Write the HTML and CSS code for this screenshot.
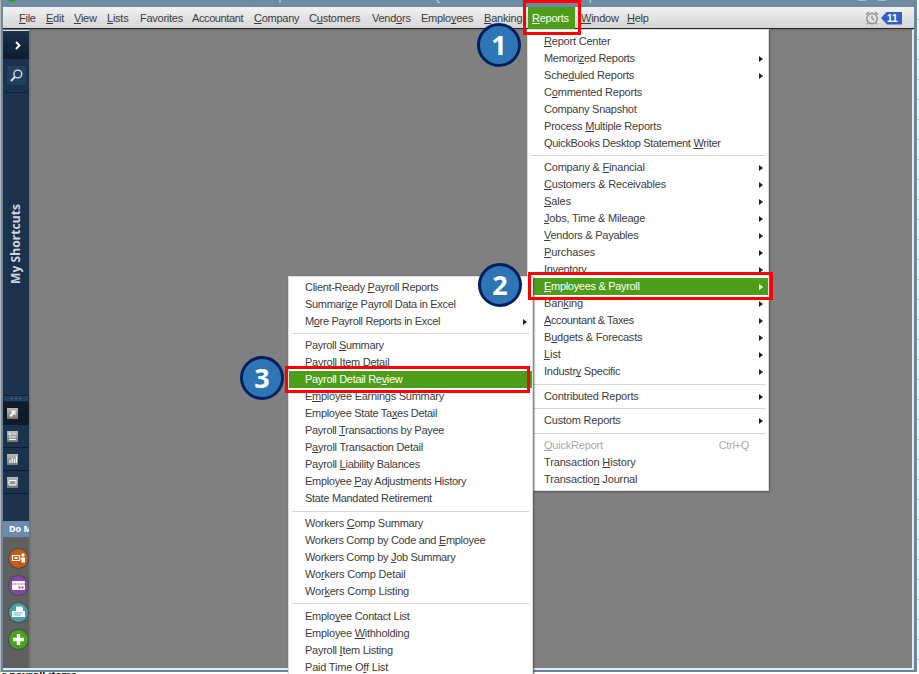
FILE: index.html
```html
<!DOCTYPE html>
<html lang="en">
<head>
<meta charset="utf-8">
<title>Reports menu</title>
<link rel="stylesheet" href="styles.css">
</head>
<body>
<div class="window">
  <div class="titlebar"><span class="logo"></span><span class="title">Sample Rock Castle Construction - QuickBooks Accountant Desktop 2021</span><span class="winbtns"><i></i><i></i></span></div>
  <nav class="menubar">
    <span><u>F</u>ile</span><span><u>E</u>dit</span><span><u>V</u>iew</span><span><u>L</u>ists</span><span>Favorites</span><span class="t4">Accountant</span><span><u>C</u>ompany</span><span class="t1">C<u>u</u>stomers</span><span>Vend<u>o</u>rs</span><span>Emplo<u>y</u>ees</span><span class="t1"><u>B</u>anking</span><span class="active"><u>R</u>eports</span><span><u>W</u>indow</span><span><u>H</u>elp</span>
    <div class="alerts">
      <svg width="14" height="14" viewBox="0 0 14 14" fill="none" stroke="#8f8f8f"><circle cx="7" cy="7.5" r="5.2" stroke-width="1.4"/><path d="M7 4.5v3l2 1.5M3 12.3l-1 1M11 12.3l1 1M1 3.5L3.7 1M13 3.5L10.3 1" stroke-width="1.3"/></svg>
      <b>11</b>
    </div>
  </nav>
  <div class="body">
    <aside class="sidebar">
      <div class="tool expand"><svg width="8" height="9" viewBox="0 0 8 9"><path d="M2 1l3.4 3.5L2 8" fill="none" stroke="#fff" stroke-width="2"/></svg></div>
      <div class="tool search"><svg viewBox="0 0 13 13" fill="none" stroke="#dce3ea"><circle cx="7.8" cy="5" r="3.9" stroke-width="1.4"/><path d="M5 7.8L1 12" stroke-width="2"/></svg></div>
      <div class="shortcuts"><span>My Shortcuts</span></div>
      <div class="grip"><i></i><i></i><i></i></div>
      <div class="tile on"><svg width="11" height="11" viewBox="0 0 11 11"><path d="M3.5 2.5h5v5L7 6 4 9.300 2.500 7.500 5.200 4.200z" fill="#f4f4f4"/></svg></div>
      <div class="tile"><svg width="11" height="11" viewBox="0 0 11 11"><path d="M1.500 3h3M3 1.500v3M5.500 3h4M2 6h7M2 8.500h7" stroke="#f4f4f4" stroke-width="1"/></svg></div>
      <div class="tile"><svg width="11" height="11" viewBox="0 0 11 11"><path d="M3 9V6M5.200 9V4M7.400 9V5M9.400 9V2.500" stroke="#f8f8f8" stroke-width="1.200"/></svg></div>
      <div class="tile"><svg width="11" height="11" viewBox="0 0 11 11"><path d="M2 3.500h7v4.500H2z" fill="#999" stroke="#fff"/></svg></div>
      <div class="fill"></div>
      <div class="domore">Do More</div>
      <div class="apps">
        <svg class="orange" viewBox="0 0 19 19"><path d="M3.500 6.500h7v5h-7z" fill="none" stroke="#fff" stroke-width="1.200"/><path d="M5.500 9h3" stroke="#fff" stroke-width="2"/><circle cx="14" cy="6" r="1.700" fill="#fff"/><path d="M11.500 8.500h4.500v5h-3.500v-3h-1z" fill="#fff"/></svg>
        <svg class="purple" viewBox="0 0 19 19"><rect x="3" y="5" width="13" height="9" rx="1" fill="#fff"/><path d="M3 8h13" stroke="#8a4bb0" stroke-dasharray="1 .5"/><path d="M9.500 11.500h2M12.500 11.500h2" stroke="#8a4bb0" stroke-width="2"/></svg>
        <svg class="teal" viewBox="0 0 19 19"><path d="M7 8V3.500h5.500L14 5v3M3 8h13v6H3z" fill="#fff"/><path d="M4.500 10h9M4.500 12h7" stroke="#6aafb8"/></svg>
        <svg class="green" viewBox="0 0 19 19"><path d="M9.500 4v11M4 9.500h11" stroke="#fff" stroke-width="3.400"/></svg>
      </div>
    </aside>
    <main class="workspace"></main>
  </div>
</div>
<div class="behind"></div>
<div class="crumbs">r payroll items</div>

<div class="menu reports">
  <p><u>R</u>eport Center</p>
  <p class="sub t3">Memori<u>z</u>ed Reports</p>
  <p class="sub">Sche<u>d</u>uled Reports</p>
  <p>C<u>o</u>mmented Reports</p>
  <p class="t25">Company Snapshot</p>
  <p>Process <u>M</u>ultiple Reports</p>
  <p class="t3">QuickBooks Desktop Statement <u>W</u>riter</p>
  <hr class="tight">
  <p class="sub">Company &amp; <u>F</u>inancial</p>
  <p class="sub"><u>C</u>ustomers &amp; Receivables</p>
  <p class="sub t1"><u>S</u>ales</p>
  <p class="sub"><u>J</u>obs, Time &amp; Mileage</p>
  <p class="sub t25"><u>V</u>endors &amp; Payables</p>
  <p class="sub t1"><u>P</u>urchases</p>
  <p class="sub t3"><u>I</u>nventory</p>
  <p class="sub selected t3"><u>E</u>mployees &amp; Payroll</p>
  <p class="sub t1">Ban<u>k</u>ing</p>
  <p class="sub t4"><u>A</u>ccountant &amp; Taxes</p>
  <p class="sub">B<u>u</u>dgets &amp; Forecasts</p>
  <p class="sub t1"><u>L</u>ist</p>
  <p class="sub t25">Industr<u>y</u> Specific</p>
  <hr>
  <p class="sub">Contributed Reports</p>
  <hr class="tight">
  <p class="sub">Custom Reports</p>
  <hr>
  <p class="disabled"><u>Q</u>uickReport<kbd>Ctrl+Q</kbd></p>
  <p class="t15">Transaction <u>H</u>istory</p>
  <p class="t15">Transactio<u>n</u> Journal</p>
</div>

<div class="menu payroll">
  <p class="t3">Client-Ready <u>P</u>ayroll Reports</p>
  <p class="t3">Summari<u>z</u>e Payroll Data in Excel</p>
  <p class="sub t35">M<u>o</u>re Payroll Reports in Excel</p>
  <hr class="tight">
  <p class="t35">Payroll <u>S</u>ummary</p>
  <p class="t25">Payroll Item Detail</p>
  <p class="selected t3">Payroll Detail Re<u>v</u>iew</p>
  <p class="t25">E<u>m</u>ployee Earnings Summary</p>
  <p class="t3">Employee State Ta<u>x</u>es Detail</p>
  <p class="t3">Payroll <u>T</u>ransactions by Payee</p>
  <p class="t25">P<u>a</u>yroll Transaction Detail</p>
  <p class="t25">Payroll <u>L</u>iability Balances</p>
  <p class="t3">Employee <u>P</u>ay Adjustments History</p>
  <p class="t3">State Mandated Retirement</p>
  <hr>
  <p class="t25">Workers <u>C</u>omp Summary</p>
  <p class="t3">Workers Comp by Code and <u>E</u>mployee</p>
  <p class="t3">Workers Comp by <u>J</u>ob Summary</p>
  <p>Wo<u>r</u>kers Comp Detail</p>
  <p>Wor<u>k</u>ers Comp Listing</p>
  <hr class="high">
  <p class="t25">Emplo<u>y</u>ee Contact List</p>
  <p class="t25">Employee <u>W</u>ithholding</p>
  <p class="t25">Payroll <u>I</u>tem Listing</p>
  <p>Paid Time O<u>f</u>f List</p>
</div>

<div class="frame f1"></div><div class="frame f2"></div><div class="frame f3"></div>
<div class="step s1">1</div><div class="step s2">2</div><div class="step s3">3</div>
</body>
</html>
```
FILE: styles.css
```css
* { box-sizing: border-box; }
body { margin: 0; width: 919px; height: 674px; overflow: hidden; position: relative; background: #fff; font: 11px "Liberation Sans", Arial, sans-serif; color: #3c3c3c; display: grid; grid-template: 672px 2px / 917px 2px; }
u { text-decoration: underline; text-underline-offset: 1px; text-decoration-thickness: 1px; text-decoration-skip-ink: none; }
.window { background: #6987a0; padding: 0 3px 2px 2px; border-left: 1px solid #b8b8b8; display: flex; flex-direction: column; }
.titlebar { height: 7px; background: #6d8ca2; position: relative; overflow: hidden; flex: none; }
.logo { position: absolute; left: 4px; top: -9px; width: 10px; height: 11px; border-radius: 50%; background: #2ca01c; }
.title { position: absolute; left: 252px; top: -12px; font-size: 12px; letter-spacing: -0.38px; line-height: 17px; white-space: nowrap; color: #c3d2dd; }
.winbtns { position: absolute; right: 28px; top: 0; display: flex; gap: 12px; }
.winbtns i { width: 8px; height: 1px; background: #a9bdcb; }
.menubar { height: 22px; flex: none; background: linear-gradient(#f2f2f2, #d5d5d5); border-bottom: 1px solid #222; display: grid; grid-template-columns: 27px 28px 33px 33px 52px 62px 55px 63px 49px 63px 44px 53px 46px 40px 1fr; padding-left: 16px; line-height: 22px; letter-spacing: -0.25px; }
.menubar span { white-space: nowrap; }
.alerts { display: flex; align-items: center; gap: 2px; margin-left: auto; padding-right: 12px; letter-spacing: 0; }
.alerts b { width: 21px; height: 13px; line-height: 13px; padding-left: 6px; font-size: 10px; color: #fff; background: #355fc4; clip-path: polygon(0 50%, 6px 0, 100% 0, 100% 100%, 6px 100%); }
.menubar .active { background: #4c9e1a; color: #fff; width: 47px; padding-left: 4px; }
.body { flex: 1; display: flex; border-right: 2px solid #e4e9ea; border-bottom: 2px solid #e4e9ea; border-top: 1px solid #777; background: #808080; min-height: 0; }
.sidebar { width: 26px; flex: none; background: #1b324d; display: flex; flex-direction: column; overflow: hidden; border-top: 1px solid #d5dade; }
.workspace { flex: 1; border-left: 2px solid #737373; border-top: 1px solid #737373; background: #808080; }
.tool { display: flex; align-items: center; justify-content: center; flex: none; }
.expand { height: 28px; background: linear-gradient(#1b324d, #0e1c2b); padding-left: 3px; }
.search { height: 34px; border-bottom: 1px solid #14263a; }
.search svg { background: #223f60; width: 19px; height: 19px; padding: 3px; }
.shortcuts { height: 302px; flex: none; display: flex; justify-content: center; padding: 110px 0 0; }
.shortcuts span { writing-mode: vertical-rl; transform: rotate(180deg); font: bold 12px/16px "Noto Sans", sans-serif; letter-spacing: 0.1px; color: #d0d6dc; height: 81px; white-space: nowrap; }
.grip { height: 7px; flex: none; border: 1px solid #14263a; background: #20405f; display: flex; gap: 2px; align-items: center; justify-content: center; }
.grip i { width: 2px; height: 1px; background: #4b7aa3; }
.tile { height: 23px; flex: none; border-bottom: 1px solid #0e1c2b; display: flex; align-items: center; padding-left: 4px; }
.tile.on { background: #101c28; }
.tile svg { background: linear-gradient(#bbb, #777); }
.fill { flex: 1; }
.domore { height: 16px; flex: none; background: #6d8cad; color: #fff; font: bold 9px/16px "Noto Sans", sans-serif; white-space: nowrap; padding-left: 6px; }
.apps { height: 131px; flex: none; background: #606060; padding: 12px 0 0 6px; display: flex; flex-direction: column; gap: 8px; }
.apps svg { width: 19px; height: 19px; border-radius: 50%; flex: none; box-shadow: 0 0 1px 1px #4b4b4b; }
.orange { background: #c45a14; }
.purple { background: #8545ad; }
.teal { background: #46a0ac; }
.green { background: #46a51a; }
.behind { background: repeating-linear-gradient(#f7fafc 0 19px, #bbb 19px 20px); }
.crumbs { height: 2px; overflow: hidden; font-weight: bold; line-height: 7px; width: 80px; padding-left: 2px; color: #111; }
.menu { position: absolute; background: #fff; border: 1px solid #ddd; box-shadow: 1px 1px 2px #555; letter-spacing: -0.2px; }
.menu p { margin: 0; height: 17px; line-height: 17px; padding-left: 16px; white-space: nowrap; position: relative; }
.menu hr { margin: 4px 3px 3px; border: 0; height: 1px; background: #d5d5d5; }
.menu hr.tight { margin-top: 3px; }
.menu hr.high { margin: 3px 3px 4px; }
.menu .t1 { letter-spacing: -0.1px; }
.menubar .t1 { letter-spacing: -0.2px; }
.t15 { letter-spacing: -0.15px; }
.t25 { letter-spacing: -0.26px; }
.t3 { letter-spacing: -0.31px; }
.t35 { letter-spacing: -0.34px; }
.t4 { letter-spacing: -0.4px; }
.menu .sub::after { content: ""; position: absolute; right: 5px; top: 6px; border: 3px solid transparent; border-left: 4px solid #222; border-right: 0; }
.menu .selected { background: #4c9e1a; color: #fff; }
.menu .selected::after { border-left-color: #fff; }
.menu .disabled { color: #aaa; }
kbd { font: inherit; letter-spacing: -0.3px; position: absolute; right: 19px; top: 0; }
.reports { left: 527px; top: 29px; width: 242px; height: 462px; padding-top: 3px; }
.payroll { left: 288px; top: 276px; width: 245px; height: 410px; padding-top: 2px; }
.frame { position: absolute; border: 3px solid #f00; }
.f1 { left: 523px; top: 0; width: 58px; height: 35px; }
.f2 { left: 528px; top: 272px; width: 245px; height: 28px; }
.f3 { left: 285px; top: 366px; width: 245px; height: 27px; }
.step { position: absolute; width: 44px; height: 44px; border-radius: 50%; border: 3px solid #002060; background: #2e75b6; color: #fff; font: bold 27px/38px "Open Sans", sans-serif; text-align: center; }
.s1 { left: 477px; top: 23px; }
.s2 { left: 478px; top: 263px; }
.s3 { left: 240px; top: 356px; }
```
